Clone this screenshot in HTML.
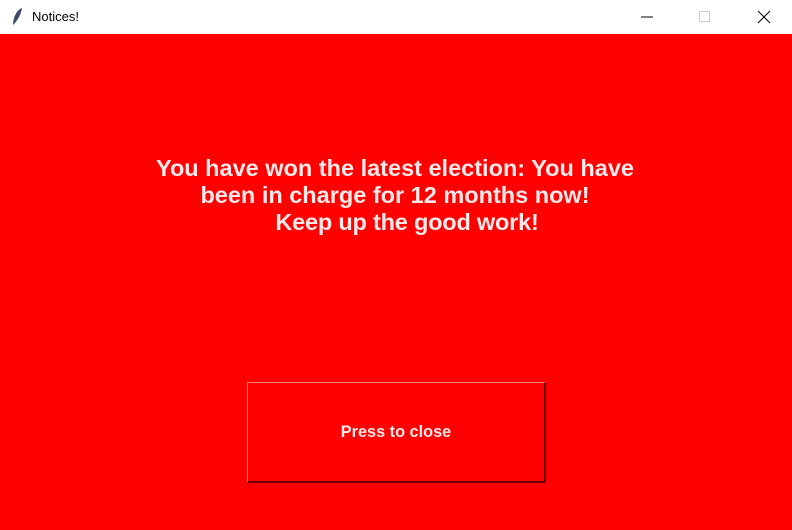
<!DOCTYPE html>
<html><head><style>
body{margin:0;width:792px;height:530px;overflow:hidden;font-family:"Liberation Sans",sans-serif;background:#f00;position:relative}
.tb{position:absolute;left:0;top:0;width:792px;height:34px;background:#fff}
.tt{position:absolute;left:32px;top:9px;font-size:13px;color:#000}
.msg{position:absolute;left:-1px;width:792px;top:155px;text-align:center;color:#ffe8e8;font-weight:bold;font-size:23.5px;line-height:27px}
.msg span{position:relative;left:12px;letter-spacing:-0.2px}
.btn{position:absolute;left:247px;top:382px;width:296px;height:98px;border-top:1px solid #ff8080;border-left:1px solid #ff8080;border-right:2px solid #600;border-bottom:2px solid #600}
.bt{position:absolute;left:0;width:100%;top:40px;text-align:center;color:#ffe8e8;font-weight:bold;font-size:16.3px}
</style></head><body>
<div class="tb">
<svg style="position:absolute;left:10px;top:7px" width="14" height="20" viewBox="0 0 14 20"><path d="M3 18 C3 10 7 3 12 1 C11 7 8 13 4 17 Z" fill="#3a4a6a"/></svg>
<div class="tt">Notices!</div>
<svg style="position:absolute;left:640px;top:10px" width="140" height="14" viewBox="0 0 140 14"><line x1="1" y1="7" x2="13" y2="7" stroke="#000"/><rect x="59.5" y="1.5" width="10" height="10" fill="none" stroke="#ccc"/><path d="M118 1 L130 13 M130 1 L118 13" stroke="#000"/></svg>
</div>
<div class="msg">You have won the latest election: You have<br>been in charge for 12 months now!<br><span>Keep up the good work!</span></div>
<div class="btn"><div class="bt">Press to close</div></div>
</body></html>
